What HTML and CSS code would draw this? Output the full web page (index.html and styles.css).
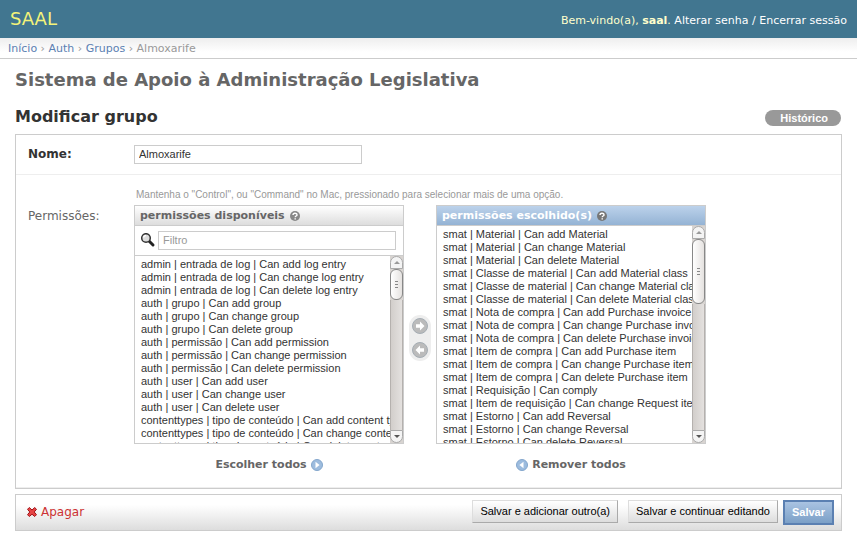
FILE: index.html
```html
<!DOCTYPE html>
<html lang="pt-br">
<head>
<meta charset="utf-8">
<title>Modificar grupo | SAAL</title>
<link rel="stylesheet" href="styles.css">
</head>
<body>
<header class="header">
  <div class="branding">SAAL</div>
  <div class="user-tools">Bem-vindo(a), <strong>saal</strong>. <a href="#">Alterar senha</a> <span class="sep">/</span> <a href="#">Encerrar sessão</a></div>
</header>
<nav class="breadcrumbs"><a href="#">Início</a> › <a href="#">Auth</a> › <a href="#">Grupos</a> › Almoxarife</nav>
<main class="content">
  <h1>Sistema de Apoio à Administração Legislativa</h1>
  <div class="title-row">
    <h2>Modificar grupo</h2>
    <a class="history" href="#">Histórico</a>
  </div>
  <form>
    <div class="module">
      <div class="form-row name-row">
        <label class="required" for="name">Nome:</label>
        <input class="text-field" id="name" type="text" value="Almoxarife">
      </div>
      <div class="form-row permissions-row">
        <label for="chosen">Permissões:</label>
        <div class="field">
          <p class="help">Mantenha o "Control", ou "Command" no Mac, pressionado para selecionar mais de uma opção.</p>
          <div class="selector">
            <div class="column">
              <div class="panel">
                <h3 class="panel-title"><label for="available">permissões disponíveis</label>
                  <svg class="help-icon" viewBox="0 0 10 10"><circle cx="5" cy="5" r="5" fill="#888"/><path d="M3 4.1C3 1.6 7 1.7 7 3.9 7 5 5.2 5 5.2 6.2M5.2 7.2V8.4" fill="none" stroke="#fff" stroke-width="1.4"/></svg>
                </h3>
                <div class="filter">
                  <label for="filter">
                    <svg class="search-icon" viewBox="0 0 16 16"><path d="M9 8l4 4" stroke="#222" stroke-width="3" stroke-linecap="round"/><circle cx="6" cy="5" r="4.3" fill="#ddd" stroke="#333" stroke-width="1.5"/><path d="M3.5 4.5Q4 2.5 6 2.5" fill="none" stroke="#fff" stroke-width="1.5"/></svg>
                  </label>
                  <input class="filter-field" id="filter" type="text" placeholder="Filtro">
                </div>
                <div class="list">
                  <select class="options available" id="available" multiple>
                    <option>admin | entrada de log | Can add log entry</option>
                    <option>admin | entrada de log | Can change log entry</option>
                    <option>admin | entrada de log | Can delete log entry</option>
                    <option>auth | grupo | Can add group</option>
                    <option>auth | grupo | Can change group</option>
                    <option>auth | grupo | Can delete group</option>
                    <option>auth | permissão | Can add permission</option>
                    <option>auth | permissão | Can change permission</option>
                    <option>auth | permissão | Can delete permission</option>
                    <option>auth | user | Can add user</option>
                    <option>auth | user | Can change user</option>
                    <option>auth | user | Can delete user</option>
                    <option>contenttypes | tipo de conteúdo | Can add content type</option>
                    <option>contenttypes | tipo de conteúdo | Can change content type</option>
                    <option>contenttypes | tipo de conteúdo | Can delete content type</option>
                  </select>
                  <div class="scrollbar" aria-hidden="true"><i class="cap up"></i><i class="thumb short"></i><i class="track"></i><i class="cap down"></i></div>
                </div>
              </div>
              <a class="all" href="#">Escolher todos
                <svg class="all-icon" viewBox="0 0 12 12"><circle cx="6" cy="6" r="5.5" fill="#9dbcde" stroke="#83a6cc"/><path d="M4.5 2.8L8.6 6 4.5 9.2z" fill="#fff"/></svg>
              </a>
            </div>
            <div class="chooser">
              <button type="button" aria-label="Adicionar"><svg viewBox="0 0 16 16"><circle cx="8" cy="8" r="7.5" fill="#bbb" stroke="#a5adb4"/><path d="M4 6.3h4V3.5L12.5 8 8 12.5V9.7H4z" fill="#fff"/></svg></button>
              <button type="button" aria-label="Remover"><svg viewBox="0 0 16 16"><circle cx="8" cy="8" r="7.5" fill="#bbb" stroke="#a5adb4"/><path d="M12 6.3H8V3.5L3.5 8 8 12.5V9.7h4z" fill="#fff"/></svg></button>
            </div>
            <div class="column">
              <div class="panel">
                <h3 class="panel-title chosen-title"><label for="chosen">permissões escolhido(s)</label>
                  <svg class="help-icon" viewBox="0 0 10 10"><circle cx="5" cy="5" r="5" fill="#777"/><path d="M3 4.1C3 1.6 7 1.7 7 3.9 7 5 5.2 5 5.2 6.2M5.2 7.2V8.4" fill="none" stroke="#fff" stroke-width="1.4"/></svg>
                </h3>
                <div class="list">
                  <select class="options chosen" id="chosen" multiple>
                    <option>smat | Material | Can add Material</option>
                    <option>smat | Material | Can change Material</option>
                    <option>smat | Material | Can delete Material</option>
                    <option>smat | Classe de material | Can add Material class</option>
                    <option>smat | Classe de material | Can change Material class</option>
                    <option>smat | Classe de material | Can delete Material class</option>
                    <option>smat | Nota de compra | Can add Purchase invoice</option>
                    <option>smat | Nota de compra | Can change Purchase invoice</option>
                    <option>smat | Nota de compra | Can delete Purchase invoice</option>
                    <option>smat | Item de compra | Can add Purchase item</option>
                    <option>smat | Item de compra | Can change Purchase item</option>
                    <option>smat | Item de compra | Can delete Purchase item</option>
                    <option>smat | Requisição | Can comply</option>
                    <option>smat | Item de requisição | Can change Request item</option>
                    <option>smat | Estorno | Can add Reversal</option>
                    <option>smat | Estorno | Can change Reversal</option>
                    <option>smat | Estorno | Can delete Reversal</option>
                  </select>
                  <div class="scrollbar" aria-hidden="true"><i class="cap up"></i><i class="thumb long"></i><i class="track"></i><i class="cap down"></i></div>
                </div>
              </div>
              <a class="all" href="#">
                <svg class="all-icon" viewBox="0 0 12 12"><circle cx="6" cy="6" r="5.5" fill="#9dbcde" stroke="#83a6cc"/><path d="M7.5 2.8L3.4 6l4.1 3.2z" fill="#fff"/></svg>
                Remover todos</a>
            </div>
          </div>
        </div>
      </div>
    </div>
    <div class="submit-row">
      <a class="delete" href="#"><svg viewBox="0 0 10 10"><path d="M2.3.5L5 3 7.7.5 9.5 2.3 7.2 5l2.3 2.7-1.8 1.8L5 7.2 2.3 9.5.5 7.7 2.8 5 .5 2.3z" fill="#e64545" stroke="#a01217"/></svg>Apagar</a>
      <button class="button" type="button">Salvar e adicionar outro(a)</button>
      <button class="button" type="button">Salvar e continuar editando</button>
      <button class="button default" type="button">Salvar</button>
    </div>
  </form>
</main>
</body>
</html>
```
FILE: styles.css
```css
* { box-sizing: border-box; }
body {
  margin: 0;
  font: 12px/16px "DejaVu Sans", Verdana, sans-serif;
  color: #333;
  background: #fff;
}
a { color: #5b80b2; text-decoration: none; }
h1, h2, h3, p { margin: 0; }
svg { display: block; flex: none; }
input, select, button { font-family: "Liberation Sans", Arial, sans-serif; font-size: 11px; }

.header {
  display: flex;
  align-items: center;
  justify-content: space-between;
  height: 38px;
  padding: 0 10px;
  background: #417690;
  color: #ffc;
}
.branding { font-size: 18px; color: #f4f379; }
.user-tools { padding-top: 4px; font-size: 11px; }
.user-tools a, .sep { color: #fff; }

.breadcrumbs {
  height: 21px;
  padding: 3px 8px;
  border-bottom: 1px solid #ccc;
  background: linear-gradient(#eee, #fff 14px);
  font-size: 11px;
  line-height: 15px;
  color: #999;
}

.content { padding: 10px 15px; }
h1 { font-size: 18px; line-height: 22px; color: #666; }
.title-row {
  display: flex;
  justify-content: space-between;
  align-items: flex-end;
  margin: 16px 0 8px;
}
h2 { font-size: 16px; line-height: 19px; }
.history {
  margin-right: 1px;
  padding: 0 13px 0 15px;
  border-radius: 8px;
  background: #999;
  color: #fff;
  font: bold 11px/16px "Liberation Sans", Arial, sans-serif;
}

.module { border: 1px solid #ccc; }
.form-row { display: flex; padding: 10px 12px; }
.form-row > label { width: 106px; flex: none; }
.name-row { border-bottom: 1px solid #eee; }
.required { line-height: 18px; font-weight: bold; }
.text-field {
  width: 228px;
  height: 19px;
  padding: 1px 4px 2px;
  border: 1px solid #ccc;
  color: #333;
}
.permissions-row { padding-bottom: 15px; border-bottom: 1px solid #eee; }
.permissions-row > label { padding-top: 23px; color: #666; }
.help {
  padding: 3px 2px;
  font: 10px/14px "Liberation Sans", Arial, sans-serif;
  color: #999;
}

.selector { display: flex; align-items: flex-start; }
.column { width: 270px; }
.panel { border: 1px solid #ccc; }
.panel-title {
  display: flex;
  align-items: center;
  gap: 5px;
  height: 20px;
  padding: 0 5px;
  border-bottom: 1px solid #ccc;
  background: linear-gradient(#fff, #ddd);
  font-size: 11px;
  color: #666;
}
.chosen-title { background: linear-gradient(#bcd2eb, #94b3d4); color: #fff; }
.help-icon { width: 10px; height: 10px; }
.filter {
  display: flex;
  align-items: center;
  gap: 2px;
  height: 30px;
  padding: 0 7px 0 5px;
  border-bottom: 1px solid #ccc;
}
.search-icon { width: 16px; height: 16px; }
.filter-field {
  flex: 1;
  height: 19px;
  padding: 1px 4px 2px;
  border: 1px solid #ccc;
}
.filter-field::placeholder { color: #999; }
.list { display: flex; }
.options {
  flex: 1;
  min-width: 0;
  padding: 2px 0 0;
  border: 0;
  border-radius: 0;
  background: #fff;
  color: #333;
  scrollbar-width: none;
  overflow: hidden;
}
.options option { min-height: 0; height: 13px; padding: 0 0 0 6px; }
.available { height: 187px; }
.chosen { height: 217px; }

.scrollbar {
  display: flex;
  flex-direction: column;
  width: 13px;
  background: #d8d4d1;
}
.cap {
  display: flex;
  align-items: center;
  justify-content: center;
  height: 13px;
  border: 1px solid #aaa;
  background: #f4f4f4;
}
.cap::after { content: ""; border: 3px solid transparent; }
.up { border-radius: 7px 7px 0 0; }
.up::after { border-top: 0; border-bottom-color: #999; }
.down { border-radius: 0 0 7px 7px; }
.down::after { border-bottom: 0; border-top-color: #555; }
.track {
  flex: 1;
  border: solid #b5b1ae;
  border-width: 0 1px;
  background: linear-gradient(90deg, #d2cecb, #e4e1df);
}
.thumb {
  display: flex;
  align-items: center;
  justify-content: center;
  border: 1px solid #888;
  border-radius: 6px;
  background: linear-gradient(90deg, #fff, #e5e2e0);
}
.thumb::after {
  content: "";
  width: 3px;
  height: 7px;
  background: repeating-linear-gradient(#888 0 1px, transparent 1px 3px);
}
.short { height: 31px; }
.long { height: 65px; }

.chooser {
  display: flex;
  flex-direction: column;
  gap: 8px;
  margin: 110px 5px 0;
  padding: 3px;
  border-radius: 11px;
  background: #eee;
}
.chooser button { padding: 0; border: 0; background: none; }
.chooser svg { width: 16px; height: 16px; }
.all {
  display: flex;
  align-items: center;
  justify-content: center;
  gap: 4px;
  padding-top: 13px;
  font-size: 11px;
  line-height: 15px;
  font-weight: bold;
  color: #666;
}
.all-icon { width: 12px; height: 12px; }

.submit-row {
  display: flex;
  align-items: flex-start;
  gap: 10px;
  height: 37px;
  margin-top: 5px;
  padding: 5px 7px 0 11px;
  border: 1px solid #ccc;
  background: linear-gradient(#fff 10px, #ddd);
}
.delete {
  display: flex;
  align-items: center;
  gap: 4px;
  margin-right: auto;
  padding-top: 4px;
  color: #c33;
}
.delete svg { width: 10px; height: 10px; }
.button {
  height: 23px;
  padding: 0 7px 1px;
  border: 1px solid;
  border-color: #ddd #aaa #aaa #ddd;
  background: linear-gradient(#fff, #ddd);
  color: #000;
}
.default {
  height: 25px;
  margin-left: -5px;
  border: 2px solid #5b80b2;
  background: linear-gradient(#a9c3e2, #7ca0c7);
  font-weight: bold;
  color: #fff;
}
```
